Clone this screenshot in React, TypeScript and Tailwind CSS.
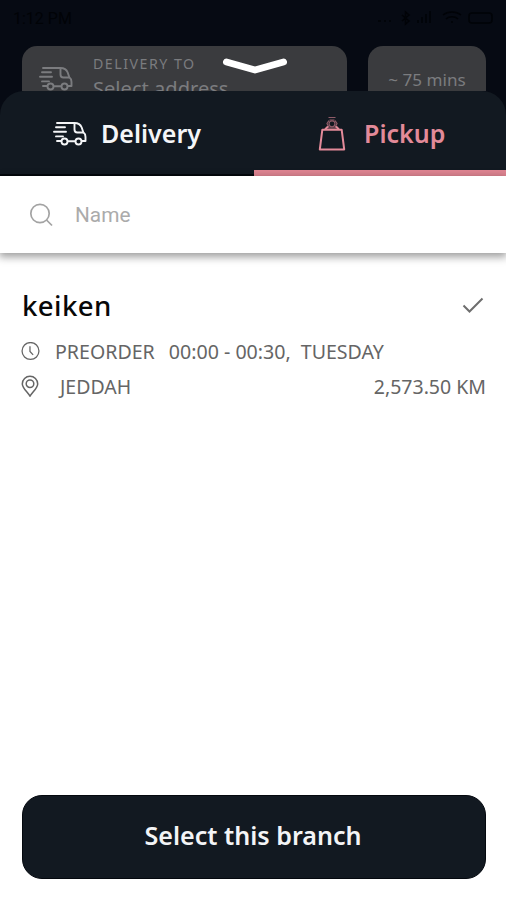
import type { ReactNode } from 'react';

const TruckIcon = ({ className }: { className?: string }) => (
  <svg viewBox="0 0 34 24" className={className} fill="none" stroke="currentColor" strokeWidth="1.9" strokeLinecap="round" strokeLinejoin="round">
    <path d="M4 1.5H21.5C25.5 1.5 27.5 3 28.7 6L30.3 10.8C32 12 32.5 13.5 32.5 15.5V19.5H29.2" />
    <path d="M21.5 2V8C21.5 10 22.5 11 24.3 11H30" />
    <path d="M3 5.7H12M1 10.3H13M3 14.9H10M4 19.5H8M15 19.8H22" />
    <circle cx="11.5" cy="20" r="3" />
    <circle cx="25.5" cy="20" r="3" />
  </svg>
);

const BagIcon = ({ className }: { className?: string }) => (
  <svg viewBox="0 0 28 36" className={className} fill="none" stroke="currentColor">
    <path d="M4.3 13.8H23.7L26.2 33.5H1.8Z" strokeWidth="2" strokeLinejoin="round" />
    <path d="M7.5 13L9.5 11M20.5 13L18.5 11" strokeWidth="2" strokeLinecap="round" />
    <g strokeWidth="1.2" opacity="0.6">
      <path d="M10.5 1.5H17.5M11.5 4H16.5M9.5 12H18.5" />
      <path d="M11 4.5L9 7.5L11 11.5M17 4.5L19 7.5L17 11.5" />
      <circle cx="14" cy="7.8" r="3" />
    </g>
  </svg>
);

const SearchIcon = ({ className }: { className?: string }) => (
  <svg viewBox="0 0 24 24" className={className} fill="none" stroke="currentColor" strokeWidth="1.7">
    <circle cx="11" cy="10.5" r="9.2" />
    <path d="M17.5 17L23 22.5" />
  </svg>
);

const ClockIcon = ({ className }: { className?: string }) => (
  <svg viewBox="0 0 18 18" className={className} fill="none" stroke="currentColor" strokeWidth="1.2">
    <circle cx="9" cy="8.5" r="8" />
    <path d="M8.5 4V8.9L11.5 12.2" />
  </svg>
);

const PinIcon = ({ className }: { className?: string }) => (
  <svg viewBox="0 0 18 22" className={className} fill="none" stroke="currentColor" strokeWidth="1.5">
    <path d="M9 21.2C6.5 17 1.3 13 1.3 8.9A7.7 7.7 0 0 1 16.7 8.9C16.7 13 11.5 17 9 21.2Z" />
    <circle cx="9" cy="8.7" r="3.8" />
  </svg>
);

const StatusIcons = () => (
  <svg viewBox="0 0 120 18" className="h-[18px] w-[120px]" fill="none" stroke="currentColor" strokeWidth="1.5">
    <path d="M2 12H5M8 12H10M13 12H15" />
    <path d="M26 6L33 12L29.5 15V3L33 6L26 12" />
    <path d="M42 14V11M46 14V8M50 14V5M54 14V2" />
    <path d="M67 6C72 2 80 2 85 6M70 10C73 7 79 7 82 10M75 13H77" />
    <rect x="93" y="4" width="23" height="10" rx="3" />
  </svg>
);

const Tab = ({ icon, label, active }: { icon: ReactNode; label: string; active?: boolean }) => (
  <button
    className={
      active
        ? 'flex w-[252px] items-start border-b-6 border-[#de8491] pl-[64px] text-[#e38a99]'
        : 'flex w-[254px] items-start border-b-2 border-[#03070c] pl-[53px] text-[#f4f5f7]'
    }
  >
    {icon}
    <span className={active ? 'ml-[18px] mt-[24px] text-[25px] leading-[36px] font-semibold' : 'ml-[14px] mt-[24px] text-[25px] leading-[36px] font-semibold'}>
      {label}
    </span>
  </button>
);

export default function App() {
  return (
    <div className="relative flex h-[900px] w-[506px] flex-col overflow-hidden bg-white font-['Noto_Sans','Open_Sans',sans-serif]">
      <header className="h-[91px] shrink-0 overflow-hidden bg-[#060a13]">
        <div className="flex h-[46px] items-start justify-between pr-[10px] pl-[13px] pt-[9px] text-[#010307]">
          <span className="font-['Roboto',sans-serif] text-[16px] leading-[20px]">1:12 PM</span>
          <StatusIcons />
        </div>
        <div className="flex gap-[21px] px-[22px] text-[#7b7c7f]">
          <div className="flex h-[70px] w-[325px] shrink-0 items-start rounded-[15px] bg-[#3a3b3e]">
            <TruckIcon className="mt-[20px] ml-[17px] h-[25px] w-[34px]" />
            <div className="ml-[20px] flex flex-col">
              <span className="mt-[8px] text-[14.2px] leading-[20px] tracking-[1.5px]">DELIVERY TO</span>
              <span className="mt-[2px] text-[20.1px] leading-[26px]">Select address</span>
            </div>
          </div>
          <div className="h-[70px] w-[118px] shrink-0 rounded-[15px] bg-[#3a3b3e] pt-[22px] text-center text-[17.1px] leading-[24px]">
            ~ 75 mins
          </div>
        </div>
      </header>

      <svg viewBox="0 0 66 18" className="absolute top-[57px] left-[222px] h-[18px] w-[66px]" fill="none" stroke="#fff" strokeWidth="7" strokeLinecap="round" strokeLinejoin="round">
        <path d="M4.5 5L33 13L61.5 5" />
      </svg>

      <nav className="h-[85px] shrink-0 bg-[#060a13]">
        <div className="flex h-full overflow-hidden rounded-t-[24px] bg-[#121921]">
          <Tab icon={<TruckIcon className="mt-[30px] h-[25px] w-[34px]" />} label="Delivery" />
          <Tab active icon={<BagIcon className="mt-[25px] h-[36px] w-[28px]" />} label="Pickup" />
        </div>
      </nav>

      <label className="z-10 flex h-[77px] shrink-0 items-center bg-white pl-[29px] shadow-[0_3px_8px_1px_rgba(0,0,0,0.38)]">
        <SearchIcon className="h-[24px] w-[24px] text-[#a3a3a3]" />
        <input
          placeholder="Name"
          className="mt-[2px] ml-[22px] w-[300px] font-['Roboto',sans-serif] text-[20.8px] outline-none placeholder:text-[#ababab]"
        />
      </label>

      <main className="flex flex-1 flex-col pt-[33px] pr-[20px] pb-[21px] pl-[22px]">
        <div className="flex items-center justify-between">
          <h2 className="text-[27.6px] leading-[38px] font-medium tracking-[0.4px] text-[#080808]">keiken</h2>
          <svg viewBox="0 0 22 17" className="mr-[2px] h-[17px] w-[22px] text-[#6e6e6e]" fill="none" stroke="currentColor" strokeWidth="2">
            <path d="M1.5 8.5L7.5 14.5L20.5 1.5" />
          </svg>
        </div>

        <div className="mt-[10px] flex h-[35px] items-center text-[19.6px] text-[#656565]">
          <ClockIcon className="-ml-px h-[19px] w-[19px]" />
          <span className="ml-[15px]">PREORDER</span>
          <span className="ml-[14px]">00:00 - 00:30,</span>
          <span className="ml-[10px]">TUESDAY</span>
        </div>

        <div className="flex h-[35px] items-center text-[19.5px] text-[#656565]">
          <PinIcon className="-ml-px mb-[2px] h-[22px] w-[18px]" />
          <span className="ml-[21px]">JEDDAH</span>
          <span className="ml-auto">2,573.50 KM</span>
        </div>

        <button className="mt-auto h-[84px] rounded-[20px] border border-[#04080e] bg-[#121921] pr-[2px] pb-[2px] text-[25.1px] font-semibold text-[#f3f4f6]">
          Select this branch
        </button>
      </main>
    </div>
  );
}
